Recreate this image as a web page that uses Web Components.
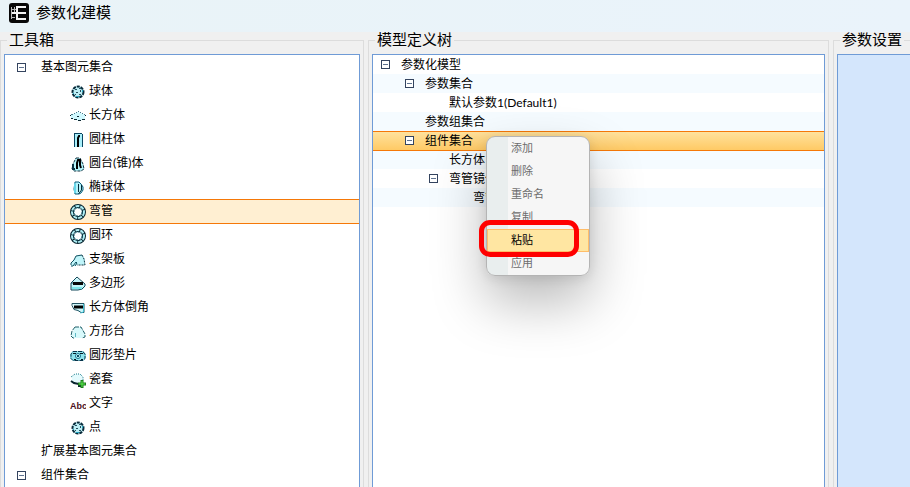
<!DOCTYPE html>
<html lang="zh-CN">
<head>
<meta charset="utf-8">
<title>参数化建模</title>
<style>
	html, body
	{
		height: 100%;
		margin: 0;
	}

	body
	{
		overflow: hidden;
		font-family: Lato, "Noto Sans CJK SC", sans-serif;
		font-size: 12px;
		color: #000;
		background: #f0f0f0;
	}
</style>
</head>
<body>
<model-app></model-app>

<script>
const toolTree = [
	{ label: "基本图元集合", open: true },
	{ label: "球体", icon: "sphere" },
	{ label: "长方体", icon: "box" },
	{ label: "圆柱体", icon: "cylinder" },
	{ label: "圆台(锥)体", icon: "cone" },
	{ label: "椭球体", icon: "ellipsoid" },
	{ label: "弯管", icon: "ring", selected: true },
	{ label: "圆环", icon: "ring" },
	{ label: "支架板", icon: "bracket" },
	{ label: "多边形", icon: "polygon" },
	{ label: "长方体倒角", icon: "chamfer" },
	{ label: "方形台", icon: "frustum" },
	{ label: "圆形垫片", icon: "gasket" },
	{ label: "瓷套", icon: "bushing" },
	{ label: "文字", icon: "text" },
	{ label: "点", icon: "sphere" },
	{ label: "扩展基本图元集合" },
	{ label: "组件集合", open: true }
];

const modelTree = [
	{ label: "参数化模型", level: 0, open: true },
	{ label: "参数集合", level: 1, open: true },
	{ label: "默认参数1(Default1)", level: 2 },
	{ label: "参数组集合", level: 1 },
	{ label: "组件集合", level: 1, open: true, selected: true, menu: true },
	{ label: "长方体", level: 2 },
	{ label: "弯管镜像", level: 2, open: true },
	{ label: "弯管", level: 3 }
];

// app is 20x20, the tree glyphs are 16x16
const icons = {
	app: `<rect width="20" height="20" rx="3" fill="#080808"/><g fill="none" stroke="#f4f4f4"><path d="M8 3v14M7 4h10M2 10h15M7 16h10" stroke-width="2"/><path d="M2.5 4v12M3 6.5h4M3 14.5h3M5.5 4v5" stroke="#b8b8b8"/></g>`,
	sphere: `<circle cx="8" cy="8" r="6" fill="#bdeef5"/><circle cx="8" cy="8" r="5.5" fill="none" stroke="#082a3a" stroke-width="2" stroke-dasharray="3 1"/><path d="M5 5.5h2M9 4.5h2M10.5 6v2M6 8.5h2M5 10.5h1M9 10.5h2" fill="none" stroke="#24505e"/><path d="M3 9.5h1M6 12.5h3M12.5 6v2" fill="none" stroke="#23aac6"/>`,
	box: `<path d="M1 7 8 4l7 3v4l-6 2-8-3z" fill="#cff8fe"/><path d="M1 6.5h2M4 5.5h1M6 4.5h1M8 3.5h1M10 4.5h1M12 5.5h1M14 6.5h1" stroke="#4a7c8c"/><path d="M0 7.5h1M15 7.5h1M1 10.5h2M4 11.5h3M8 12.5h3M12 11.5h3M7 8.5h2" stroke="#0c2630"/>`,
	cylinder: `<path d="M5 1h7v14H5z" fill="#a9effa"/><path d="M4.5 1v14M12.5 2v13M5 1.5h7" fill="none" stroke="#0a4560"/><path d="M8 15V6l1-2h1" fill="none" stroke="#000" stroke-width="2"/>`,
	cone: `<path d="M6 2h4l3 6 1 5-3 2H4l-2-2 1-5z" fill="#b4f4fb" stroke="#113442" stroke-dasharray="3 1"/><path d="M7 13V7l1-3h2v5l1 3" fill="none" stroke="#000" stroke-width="2"/><path d="M3 8v5h2" fill="none" stroke="#083142" stroke-width="2"/>`,
	ellipsoid: `<path d="M5 2h4l2 2 2 3v3l-2 3-2 1H5L4 9z" fill="#b6f4fc" stroke="#0b5f7c"/><path d="M4 3l2 1v9H4z" fill="#66d6e9"/><path d="M8.5 4v8M11.5 5v5l-3 4" fill="none" stroke="#062b39"/>`,
	ring: `<circle cx="8" cy="8" r="6" fill="none" stroke="#07242f" stroke-width="4"/><circle cx="8" cy="8" r="6" fill="none" stroke="#aeeef5" stroke-width="2" stroke-dasharray="4 1"/><circle cx="8" cy="8" r="4" fill="#fff" stroke="#146174" stroke-dasharray="2 1"/>`,
	bracket: `<path d="M6 4 12 3l3 4v6H7l-2 1H1v-3l3-3z" fill="#c0f5fa"/><path d="M1 13v-2l3-3 2-4 6-1M5 14l2-3-1-1-3 4H1" fill="none" stroke="#0f5060"/><path d="M12 3l2 4 1 6H7" fill="none" stroke="#103442" stroke-dasharray="2 1"/>`,
	polygon: `<path d="M1 7 7 2l8 6v3l-3 3H1z" fill="#c3f7fb"/><path d="M1 7 7 1l8 7v2l-3 3-4 1H1V7h2" fill="none" stroke="#104758"/><path d="M3 7.5h10" stroke="#060808" stroke-width="3"/><path d="M2 11h10v2H2z" fill="#7be8ec"/>`,
	chamfer: `<path d="M3 3h11v9l-3 1-3-2-4-2z" fill="#cbf6fa"/><path d="M2 3.5h12v9h-3l-3-2-4-1-2-4z" fill="none" stroke="#235463"/><path d="M4 7h9" stroke="#000" stroke-width="3"/><path d="M13.5 4v8l-3 1" fill="none" stroke="#3ebcd0"/>`,
	frustum: `<path d="M5 3h6l4 7v3l-3 1H3l-2-2z" fill="#d8f9fb"/><path d="M5 3h6l4 7v3l-3 1M5 3 2 7l-1 5 2 2h2" fill="none" stroke="#20606a" stroke-dasharray="4 1"/><path d="M5.5 13V9" stroke="#5fb8c4"/>`,
	gasket: `<path d="M3 3h10l3 3v4l-3 3H3l-3-3V6z" fill="#8fe3ec"/><path d="M3 3.5h10l2 3v4l-2 2H3l-2-2v-4z" fill="none" stroke="#08344b" stroke-dasharray="4 1"/><path d="M3 5.5h3M10 5.5h3M4 11.5h2M11 11.5h2" stroke="#04151e"/><circle cx="8" cy="8" r="2.5" fill="#c8fafb" stroke="#18718a"/><path d="M7 8h2" stroke="#0b4d64" stroke-width="2"/>`,
	bushing: `<path d="M2 4 6 2h5l2 4v5H9l-7-2z" fill="#e4fafd"/><path d="M1 5l4-3h5l3 3v4" fill="none" stroke="#187b8a" stroke-dasharray="1 1"/><path d="M1 9l3 2 5 1v2h3" fill="none" stroke="#08252f" stroke-width="2"/><path d="M12 8v8M8 12h8" stroke="#1d7c1b" stroke-width="3"/><path d="M12 9v6M9 12h6" stroke="#5be84e"/>`,
	text: `<text x="0" y="13" font-family="Liberation Sans" font-size="9" font-weight="bold" fill="#4c1020">Abc</text>`
};

const drawIcon = (name, size) =>
	`<svg width="${size}" height="${size}" viewBox="0 0 ${size} ${size}" aria-hidden="true">${icons[name]}</svg>`;

class TitleBar extends HTMLElement
{
	constructor()
	{
		super();
		this.attachShadow({ mode: "open" }).innerHTML = `
			<style>
				:host
				{
					display: flex;
					align-items: center;
					gap: 7px;
					height: 26px;
					padding: 0 9px 6px;
					background: linear-gradient(90deg, #e9f3f7, #eaf3fb);
				}

				h1
				{
					margin: 0;
					padding-bottom: 2px;
					font-size: 15px;
					font-weight: normal;
					line-height: 20px;
				}
			</style>
			${drawIcon("app", 20)}
			<h1><slot></slot></h1>
		`;
	}
}

class GroupPanel extends HTMLElement
{
	constructor()
	{
		super();
		this.attachShadow({ mode: "open" }).innerHTML = `
			<style>
				:host
				{
					display: flex;
					min-width: 0;
				}

				fieldset
				{
					display: flex;
					flex: 1;
					min-width: 0;
					margin: 0;
					padding: 5px 3px 0;
					border: 1px solid #dcdcdc;
					border-bottom: 0;
				}

				legend
				{
					margin-left: 3px;
					padding: 0 2px 3px;
					font-size: 15px;
					line-height: 14px;
					white-space: nowrap;
				}

				.box
				{
					flex: 1;
					min-width: 0;
					border: 1px solid #6f9bd6;
					border-bottom: 0;
					background: var(--panel-bg, #fff);
				}

				:host([open-end]) fieldset, :host([open-end]) .box
				{
					padding-right: 0;
					border-right: 0;
				}
			</style>
			<fieldset>
				<legend></legend>
				<div class="box"><slot></slot></div>
			</fieldset>
		`;
		this.shadowRoot.querySelector("legend").textContent = this.getAttribute("label");
	}
}

class ContextMenu extends HTMLElement
{
	constructor()
	{
		super();
		this.attachShadow({ mode: "open" }).innerHTML = `
			<style>
				:host
				{
					display: block;
					width: 102px;
					border: 1px solid #b4b4b4;
					border-radius: 9px;
					background: linear-gradient(90deg, #e9eeee 21px, #f6f6f6 21px);
					box-shadow: 0 26px 54px rgba(0, 0, 0, 0.28), 0 2px 12px rgba(0, 0, 0, 0.1);
				}

				button
				{
					display: block;
					box-sizing: border-box;
					width: 100%;
					height: 23px;
					padding: 0 0 1px 23px;
					border: 1px solid transparent;
					background: none;
					font: inherit;
					font-size: 11px;
					line-height: 18px;
					text-align: left;
					color: #6d6d6d;
				}

				.active
				{
					border-color: #ffbd69;
					background: #ffe6a2;
					color: #000;
				}

				.item
				{
					position: relative;
				}

				.mark
				{
					position: absolute;
					inset: -9px 10px -5px -8px;
					border: 5px solid #f00;
					border-radius: 11px;
					pointer-events: none;
				}
			</style>
			<button disabled>添加</button>
			<button disabled>删除</button>
			<button disabled>重命名</button>
			<button disabled>复制</button>
			<div class="item"><button class="active">粘贴</button><span class="mark"></span></div>
			<button disabled>应用</button>
		`;
	}
}

class TreeRow extends HTMLElement
{
	constructor({ label, level = 0, icon, open, selected, menu })
	{
		super();
		this.attachShadow({ mode: "open" }).innerHTML = `
			<style>
				:host
				{
					display: flex;
					position: relative;
					align-items: center;
					box-sizing: border-box;
					height: var(--row-height);
					padding-left: calc(var(--indent) + var(--level) * 24px);
					line-height: 18px;
					white-space: nowrap;
				}

				:host([selected])
				{
					z-index: 1;
					background: var(--selected-bg);
					box-shadow: inset 0 1px #f57808, 0 1px #f57808;
				}

				button
				{
					display: flex;
					width: 9px;
					height: 9px;
					padding: 0;
					border: 1px solid #34445f;
					align-items: center;
					justify-content: center;
					background: #fff;
				}

				button::before
				{
					content: "";
					width: 5px;
					height: 1px;
					background: #5f7390;
				}

				.lead
				{
					display: flex;
					width: var(--lead);
				}

				:host([icon]) .lead
				{
					width: 19px;
					margin-left: 53px;
				}

				svg
				{
					margin-top: 2px;
				}

				context-menu
				{
					position: absolute;
					top: 5px;
					left: 113px;
				}
			</style>
			<span class="lead"></span>
			<span class="label"></span>
		`;

		const lead = this.shadowRoot.querySelector(".lead");
		this.style.setProperty("--level", level);
		this.shadowRoot.querySelector(".label").textContent = label;
		this.toggleAttribute("selected", Boolean(selected));

		if(icon)
		{
			this.setAttribute("icon", icon);
			lead.innerHTML = drawIcon(icon, 16);
		}
		if(open)
			lead.innerHTML = `<button aria-label="${label}" aria-expanded="true"></button>`;
		if(menu)
			this.shadowRoot.appendChild(document.createElement("context-menu"));
	}
}

class TreeView extends HTMLElement
{
	constructor()
	{
		super();
		this.attachShadow({ mode: "open" }).innerHTML = `
			<style>
				:host
				{
					display: block;
					--row-height: 24px;
					--indent: 12px;
					--lead: 24px;
					--selected-bg: #ffefd2;
				}

				:host([striped])
				{
					--row-height: 19px;
					--indent: 8px;
					--lead: 20px;
					--selected-bg: linear-gradient(#ffe3a0, #ffca65);
				}

				:host([striped]) tree-row:nth-of-type(even)
				{
					background: #f5fbff;
				}
			</style>
		`;
	}

	set rows(list)
	{
		for(const row of list)
			this.shadowRoot.appendChild(new TreeRow(row));
	}
}

class ModelApp extends HTMLElement
{
	constructor()
	{
		super();
		this.attachShadow({ mode: "open" }).innerHTML = `
			<style>
				:host
				{
					display: flex;
					flex-direction: column;
					height: 100%;
				}

				main
				{
					display: grid;
					flex: 1;
					grid-template-columns: minmax(0, 364fr) minmax(0, 461fr) minmax(0, 77fr);
					gap: 4px;
					min-height: 0;
				}

				.params
				{
					--panel-bg: #d4e6fc;
				}
			</style>
			<title-bar>参数化建模</title-bar>
			<main>
				<group-panel label="工具箱"><tree-view class="tools"></tree-view></group-panel>
				<group-panel label="模型定义树"><tree-view class="model" striped></tree-view></group-panel>
				<group-panel class="params" label="参数设置" open-end></group-panel>
			</main>
		`;
		this.shadowRoot.querySelector(".tools").rows = toolTree;
		this.shadowRoot.querySelector(".model").rows = modelTree;
	}
}

window.customElements.define("title-bar", TitleBar);
window.customElements.define("group-panel", GroupPanel);
window.customElements.define("context-menu", ContextMenu);
window.customElements.define("tree-row", TreeRow);
window.customElements.define("tree-view", TreeView);
window.customElements.define("model-app", ModelApp);
</script>
</body>
</html>
